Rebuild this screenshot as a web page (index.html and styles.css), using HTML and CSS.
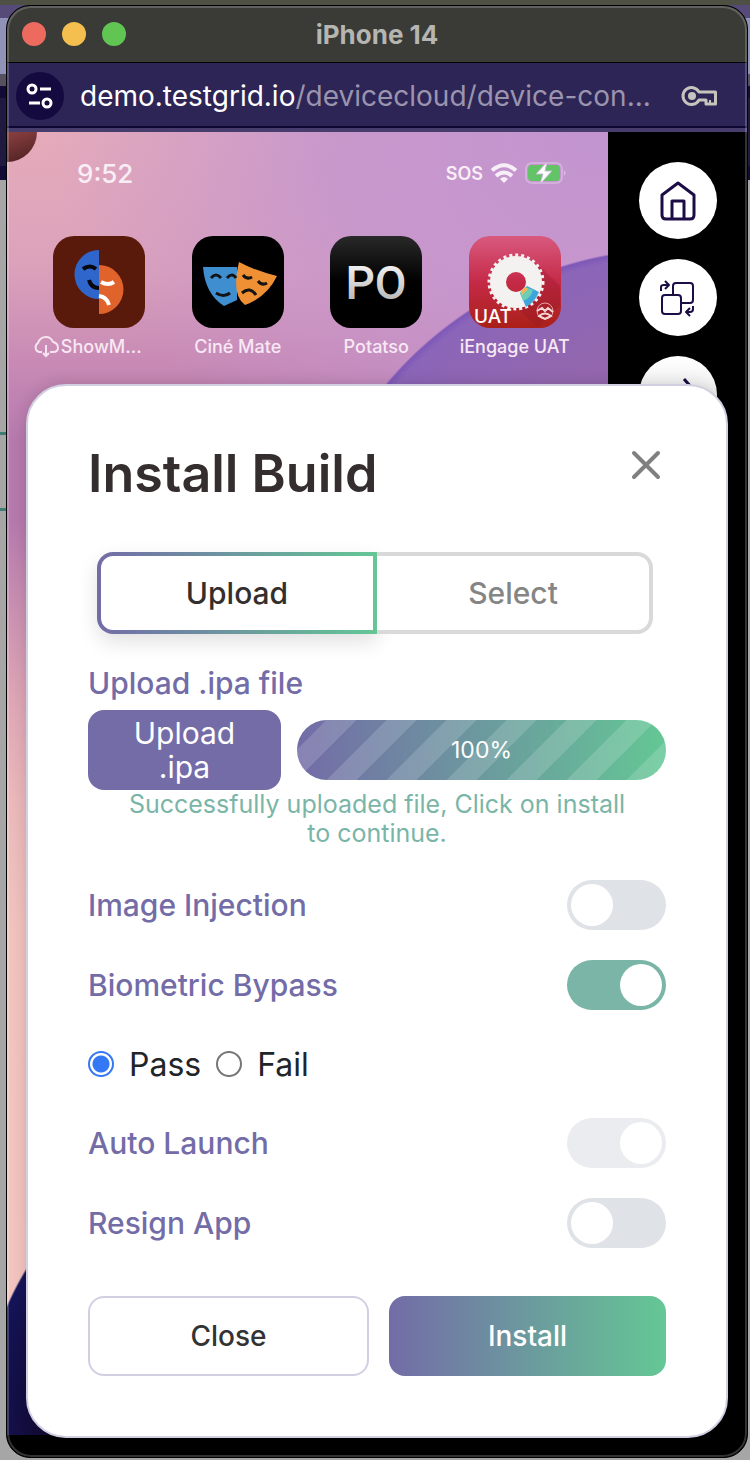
FILE: index.html
```html
<!DOCTYPE html>
<html lang="en">
<head>
  <meta charset="UTF-8">
  <meta name="viewport" content="width=device-width, initial-scale=1.0">
  <title>iPhone 14</title>
  <link rel="stylesheet" href="styles.css">
</head>
<body>
  <div class="window">
    <!-- Title bar -->
    <header class="title-bar">
      <div class="window-buttons">
        <span class="dot red"></span>
        <span class="dot yellow"></span>
        <span class="dot green"></span>
      </div>
      <h1 class="window-title">iPhone 14</h1>
    </header>

    <!-- Address bar -->
    <div class="address-bar">
      <button class="site-btn" aria-label="Site information">
        <svg width="48" height="48" viewBox="0 0 48 48" fill="none" stroke="#fff" stroke-width="3">
          <circle cx="16" cy="17" r="4"/>
          <path d="M24 17h11M13 31h11"/>
          <circle cx="31" cy="31" r="4"/>
        </svg>
      </button>
      <div class="url"><span class="host">demo.testgrid.io</span>/devicecloud/device-con...</div>
      <svg class="key-icon" width="38" height="22" viewBox="0 0 38 22" fill="none" stroke="#c6c4bd" stroke-width="3" stroke-linejoin="round">
        <path d="M18 7a8.500 8.500 0 1 0 0 8h7v4h9.500V7z"/>
        <path d="M29 19v-4" stroke-width="2"/>
        <circle cx="11" cy="11" r="4" fill="#c6c4bd" stroke="none"/>
      </svg>
    </div>

    <div class="stage">
      <!-- Device -->
      <div class="device">
        <section class="phone">
          <div class="status-bar">
            <span class="time">9:52</span>
            <div class="status-icons">
              <span class="sos">SOS</span>
              <svg width="26" height="20" viewBox="0 0 26 20" fill="none" stroke="#f7eef8" stroke-width="4">
                <path d="M1 7.500Q13-3 25 7.500M5 13Q13 6 21 13"/>
                <path d="M9 16q4-4 8 0l-4 4z" fill="#f7eef8" stroke="none"/>
              </svg>
              <svg width="42" height="24" viewBox="0 0 42 24">
                <rect x="1" y="2" width="36" height="20" rx="6" fill="none" stroke="#d3b0dc" stroke-width="2"/>
                <rect x="3" y="4" width="32" height="16" rx="4" fill="#62c466"/>
                <path d="M39 9q3 3 0 6z" fill="#d9bfe2"/>
                <path d="M22 1L11 13h7l-3 10 12-13h-7z" fill="#fff" stroke="#c9b7d5" stroke-width="1"/>
              </svg>
            </div>
          </div>

          <div class="apps">
            <div class="app">
              <svg class="app-icon" viewBox="0 0 92 92">
                <rect width="92" height="92" rx="21" fill="#5a1a0b"/>
                <path d="M46 14a24 24 0 0 0 0 49z" fill="#2f66cc"/>
                <path d="M46 29a24 24 0 0 1 0 49z" fill="#df632b"/>
                <path d="M30 33q7-5 13 0M36 44q2 8 10 8" fill="none" stroke="#08070c" stroke-width="4"/>
                <path d="M48 46q7 4 13 0M46 60q8 1 10 9" fill="none" stroke="#fff" stroke-width="4"/>
              </svg>
              <span class="app-name offloaded">
                <svg width="26" height="22" viewBox="0 0 26 22" fill="none" stroke="#f5e4f0" stroke-width="2">
                  <path d="M9 16H6a5 5 0 0 1-1-9q2-6 8-6 5 0 7 5 5 1 5 6 0 4-5 4h-3M13 9v11M10 17l3 3 3-3"/>
                </svg>
                ShowM...
              </span>
            </div>
            <div class="app">
              <svg class="app-icon" viewBox="0 0 92 92">
                <rect width="92" height="92" rx="21" fill="#000"/>
                <path d="M11 31h34v33L32 70Q13 58 11 31z" fill="#3f8ed0"/>
                <path d="M47 26q17 9 38 14-10 21-32 29-14-10-6-43z" fill="#f09035"/>
                <path d="M19 42q5-6 10 0M35 42q5-6 9 0M24 57q8 5 14 0M51 39q4 5 9 2M66 45q4 5 9 2M50 57q8-7 14 2" fill="none" stroke="#141414" stroke-width="3"/>
              </svg>
              <span class="app-name">Ciné Mate</span>
            </div>
            <div class="app">
              <svg class="app-icon" viewBox="0 0 92 92">
                <defs>
                  <linearGradient id="po-bg" x2="0" y2="1"><stop offset="0" stop-color="#292929"/><stop offset=".5" stop-color="#000"/></linearGradient>
                  <linearGradient id="po-fg" x2="0" y2="1"><stop offset="0" stop-color="#fff"/><stop offset="1" stop-color="#aaa"/></linearGradient>
                </defs>
                <rect width="92" height="92" rx="21" fill="url(#po-bg)"/>
                <text class="po-text" x="46" y="63" text-anchor="middle" fill="url(#po-fg)">PO</text>
              </svg>
              <span class="app-name">Potatso</span>
            </div>
            <div class="app">
              <svg class="app-icon" viewBox="0 0 92 92">
                <defs>
                  <linearGradient id="ia-bg" x2="0" y2="1"><stop offset="0" stop-color="#d85a7f"/><stop offset=".5" stop-color="#c52a47"/><stop offset="1" stop-color="#aa2018"/></linearGradient>
                </defs>
                <rect width="92" height="92" rx="21" fill="url(#ia-bg)"/>
                <path d="M67 27L91 50V70L69 91 48 72z" fill="#8e1724" opacity=".3"/>
                <circle cx="47" cy="46" r="18" fill="none" stroke="#f4f1f1" stroke-width="16"/>
                <circle cx="47" cy="46" r="27" fill="none" stroke="#f4f1f1" stroke-width="3" stroke-dasharray="3 3"/>
                <path d="M58 50l12 6q-4 10-13 15l-6-14z" fill="#3da5dc"/>
                <path d="M56 51l8 3q-2 8-10 11l-3-8z" fill="#6cceb5"/>
                <path d="M52 55l4-4 3 2-6 6z" fill="#f6b459"/>
                <circle cx="76" cy="75" r="8" fill="none" stroke="#e8a3a3" stroke-width="1"/>
                <path d="M68 75l5-3 3 3 3-3 5 4M70 80q6-5 12 0l-6 3z" fill="none" stroke="#f4d8d8" stroke-width="2"/>
                <text class="uat-text" x="5" y="87">UAT</text>
              </svg>
              <span class="app-name">iEngage UAT</span>
            </div>
          </div>
        </section>

        <aside class="toolbar">
          <button class="tool-btn" aria-label="Home">
            <svg width="40" height="42" viewBox="0 0 40 42" fill="none" stroke="#1c0d45" stroke-width="3" stroke-linejoin="round">
              <path d="M4 15L20 3l16 12v20q0 4-4 4H8q-4 0-4-4z"/>
              <path d="M14 39V21h12v18"/>
            </svg>
          </button>
          <button class="tool-btn" aria-label="Rotate screen">
            <svg width="40" height="40" viewBox="0 0 40 40" fill="none" stroke="#1c0d45" stroke-width="3" stroke-linejoin="round">
              <path d="M15 17V8q0-3 3-3h14q3 0 3 3v14q0 3-3 3h-9" stroke-width="2"/>
              <rect x="4" y="17" width="19" height="19" rx="3" stroke-width="2"/>
              <path d="M3 13V9q0-2 3-2h4M7 3l4 4-4 4M35 28v3q0 3-3 3h-3M32 30l-4 4 4 4" stroke-width="2"/>
            </svg>
          </button>
          <button class="tool-btn faded" aria-label="Swap">
            <svg width="40" height="40" viewBox="0 0 40 40" fill="none" stroke="#1c0d45" stroke-width="3" stroke-linejoin="round">
              <path d="M6 13h26M26 4l8 9-8 8M34 28H6M14 20l-8 8 8 8"/>
            </svg>
          </button>
        </aside>
      </div>

      <!-- Install build modal -->
      <div class="modal" role="dialog" aria-labelledby="modal-title">
        <div class="modal-header">
          <h2 class="modal-title" id="modal-title">Install Build</h2>
          <button class="close-icon" aria-label="Close dialog">
            <svg width="30" height="30" viewBox="0 0 30 30" stroke="#808080" stroke-width="4" stroke-linecap="round">
              <path d="M3 3l24 24M27 3L3 27"/>
            </svg>
          </button>
        </div>

        <div class="tabs">
          <button class="tab active">Upload</button>
          <button class="tab">Select</button>
        </div>

        <p class="field-label">Upload .ipa file</p>
        <div class="upload-row">
          <button class="upload-btn">Upload .ipa</button>
          <div class="progress" role="progressbar" aria-valuenow="100" aria-label="Upload progress">
            <div class="progress-bar" style="width: 100%">100%</div>
          </div>
        </div>
        <p class="upload-status">Successfully uploaded file, Click on install to continue.</p>

        <div class="options">
          <div class="option">
            <label class="field-label" for="image-injection">Image Injection</label>
            <input class="switch" type="checkbox" id="image-injection">
          </div>
          <div class="option">
            <label class="field-label" for="biometric">Biometric Bypass</label>
            <input class="switch" type="checkbox" id="biometric" checked>
          </div>
          <div class="radios">
            <input class="radio" type="radio" name="bypass" id="pass" checked>
            <label for="pass">Pass</label>
            <input class="radio" type="radio" name="bypass" id="fail">
            <label for="fail">Fail</label>
          </div>
          <div class="option">
            <label class="field-label" for="auto-launch">Auto Launch</label>
            <input class="switch" type="checkbox" id="auto-launch" checked disabled>
          </div>
          <div class="option">
            <label class="field-label" for="resign">Resign App</label>
            <input class="switch" type="checkbox" id="resign">
          </div>
        </div>

        <div class="modal-footer">
          <button class="btn btn-close">Close</button>
          <button class="btn btn-install">Install</button>
        </div>
      </div>
    </div>
  </div>
</body>
</html>
```

FILE: styles.css
```css
* {
  box-sizing: border-box;
}

/* Desktop behind the window */
body {
  margin: 0;
  padding: 5px 2px 2px 6px;
  font-family: Inter, "Open Sans", sans-serif;
  background:
    linear-gradient(#3f7d72, #3f7d72) 0 432px / 6px 3px no-repeat,
    linear-gradient(#3f7d72, #3f7d72) 0 508px / 6px 3px no-repeat,
    linear-gradient(#4d5043 0 5px, #554a78 5px 18px, #9092b8 18px 74px, #565060 74px 86px, #120b35 86px 98px, #211a40 98px 166px, #120b35 166px 180px, #a6a6a6 180px);
}

button {
  font-family: inherit;
  border: none;
  padding: 0;
  cursor: pointer;
}

svg {
  display: block;
}

.window {
  position: relative;
  border: 1px solid #000;
  border-radius: 24px;
  overflow: hidden;
  background: #000;
}

/* light edge drawn over the window content */
.window::after {
  content: "";
  position: absolute;
  inset: 0;
  border-radius: 24px;
  box-shadow: inset 0 0 0 2px rgba(255, 255, 255, 0.2);
  pointer-events: none;
}

/* Title bar */
.title-bar {
  display: grid;
  grid-template-columns: 1fr auto 1fr;
  align-items: center;
  height: 57px;
  padding: 0 15px;
  background: #3a3a37;
  border-bottom: 1px solid #000;
}

.window-buttons {
  display: flex;
  gap: 16px;
}

.dot {
  width: 24px;
  height: 24px;
  border-radius: 50%;
}

.red {
  background: #ed6a5e;
}

.yellow {
  background: #f5bf4f;
}

.green {
  background: #61c554;
}

.window-title {
  margin: 0;
  font-size: 26px;
  font-weight: 700;
  color: #b5b5b2;
}

/* Address bar */
.address-bar {
  display: flex;
  align-items: center;
  height: 69px;
  padding: 0 28px 0 9px;
  background: #2d2555;
  border-bottom: 4px solid #463d6c;
  box-shadow: inset 0 -2px #0d0833;
}

.site-btn {
  width: 48px;
  height: 48px;
  border-radius: 50%;
  background: #140a40;
}

.url {
  flex: 1;
  margin-left: 16px;
  font-size: 28px;
  white-space: nowrap;
  color: #9b94ae;
}

.host {
  color: #fff;
}

/* The device and the modal share one grid cell */
.stage {
  display: grid;
}

.device,
.modal {
  grid-area: 1 / 1;
}

.device {
  display: flex;
  padding-bottom: 22px;
}

.phone {
  position: relative;
  flex: 1;
  background:
    radial-gradient(circle at 293px 100%, #100822 0, #110a30 250px, #16145a 319px, transparent 321px),
    radial-gradient(circle at 669px 495px, #9467a8 0, #9467ad 260px, #8b65b8 370px, #7e58b8 377px, transparent 379px),
    radial-gradient(ellipse 560px 380px at 100% 0, #c294d0 0, rgba(194, 148, 208, 0.8) 50%, transparent),
    linear-gradient(#e5abba 0, #dca2bb 130px, #c88ab5 230px, #b67aae 310px, #b67aae 390px, #c98fb2 470px, #dfa7b6 570px, #ebb9bb 670px, #f2c4be 800px, #f4c5c0);
}

/* round corner button cut off by the window */
.phone::before {
  content: "";
  position: absolute;
  top: 0;
  left: 0;
  width: 30px;
  height: 30px;
  border-bottom-right-radius: 30px;
  background: linear-gradient(160deg, #8c4042, #4a1f20);
}

.status-bar {
  display: flex;
  justify-content: space-between;
  align-items: center;
  height: 32px;
  margin: 25px 41px 0 70px;
  color: #f9eef6;
}

.time {
  font-size: 26px;
  font-weight: 500;
}

.status-icons {
  display: flex;
  align-items: center;
  gap: 8px;
}

.sos {
  font-size: 18px;
  font-weight: 600;
}

.apps {
  display: grid;
  grid-template-columns: repeat(4, 1fr);
  margin: 47px 24px 0 23px;
}

.app {
  display: flex;
  flex-direction: column;
  align-items: center;
  gap: 8px;
}

.app-icon {
  width: 92px;
  height: 92px;
}

.app-name {
  display: flex;
  align-items: center;
  gap: 2px;
  font-size: 18px;
  font-weight: 500;
  line-height: 22px;
  white-space: nowrap;
  color: #f7e8f4;
}

.offloaded {
  margin-right: 24px;
}

.po-text {
  font-family: Roboto, sans-serif;
  font-size: 46px;
  font-weight: 500;
}

.uat-text {
  font-size: 19px;
  font-weight: 500;
  fill: #fff;
}

/* Toolbar */
.toolbar {
  display: flex;
  flex-direction: column;
  align-items: center;
  gap: 20px;
  width: 139px;
  padding-top: 30px;
  background: #000;
}

.tool-btn {
  display: flex;
  justify-content: center;
  align-items: center;
  width: 78px;
  height: 77px;
  border-radius: 50%;
  background: #fff;
}

.faded {
  background: linear-gradient(#fff, #ddd);
}

/* Modal */
.modal {
  z-index: 1;
  margin: 252px 19px 19px;
  padding: 56px 60px 60px;
  background: #fff;
  border: 2px solid #d2cfe2;
  border-radius: 40px;
  box-shadow: 0 0 16px rgba(0, 0, 0, 0.15);
}

.modal-header {
  display: flex;
  justify-content: space-between;
  align-items: flex-start;
}

.modal-title {
  margin: 0;
  font-size: 52px;
  font-weight: 600;
  line-height: 64px;
  color: #352e2e;
}

.close-icon {
  margin: 8px 5px;
  background: none;
}

.tabs {
  display: flex;
  margin: 46px 13px 0 9px;
}

.tab {
  flex: 1;
  height: 82px;
  font-size: 30px;
  font-weight: 500;
  color: #858585;
  background: #fff;
  border: 4px solid #d9d9d9;
  border-left: none;
  border-radius: 0 16px 16px 0;
}

.tab.active {
  color: #352e2e;
  border: 4px solid transparent;
  border-radius: 16px 0 0 16px;
  background:
    linear-gradient(#fff, #fff) padding-box,
    linear-gradient(90deg, #736ca7, #64c795) border-box;
  box-shadow: 0 8px 20px rgba(0, 0, 0, 0.12);
}

.field-label {
  margin: 0;
  font-size: 30px;
  font-weight: 500;
  line-height: 34px;
  color: #736ca7;
}

.tabs + .field-label {
  margin-top: 32px;
}

.upload-row {
  display: flex;
  align-items: center;
  gap: 16px;
  margin-top: 10px;
}

.upload-btn {
  width: 193px;
  height: 80px;
  padding: 0 40px;
  font-size: 30px;
  line-height: 34px;
  color: #fff;
  background: #736ca7;
  border-radius: 16px;
}

.progress {
  flex: 1;
  height: 60px;
  border-radius: 30px;
  overflow: hidden;
  background: #e9ecef;
}

.progress-bar {
  height: 100%;
  font-size: 23px;
  line-height: 60px;
  text-align: center;
  color: #fff;
  background:
    linear-gradient(135deg, transparent 25%, rgba(255, 255, 255, 0.15) 25% 50%, transparent 50% 75%, rgba(255, 255, 255, 0.15) 75%) 0 0 / 60px 60px,
    linear-gradient(90deg, #736ca7, #64c795);
}

.upload-status {
  max-width: 500px;
  margin: 0 auto;
  font-size: 25px;
  line-height: 29px;
  text-align: center;
  color: #7ab5a7;
}

/* Options */
.options {
  display: flex;
  flex-direction: column;
  gap: 30px;
  margin-top: 32px;
}

.option {
  display: flex;
  justify-content: space-between;
  align-items: center;
}

.switch {
  appearance: none;
  display: flex;
  align-items: center;
  width: 99px;
  height: 50px;
  margin: 0;
  padding: 4px;
  border-radius: 25px;
  background: #dfe2e7;
}

.switch::before {
  content: "";
  width: 42px;
  height: 42px;
  border-radius: 50%;
  background: #fff;
}

.switch:checked {
  justify-content: flex-end;
  background: #7ab5a7;
}

.switch:disabled {
  background: #ebecf0;
}

.radios {
  display: flex;
  align-items: center;
  height: 48px;
  font-size: 32px;
  color: #212529;
}

.radios label {
  margin: 0 15px;
}

.radio {
  appearance: none;
  width: 26px;
  height: 26px;
  margin: 0;
  border: 2px solid #767676;
  border-radius: 50%;
  background: #fff;
}

.radio:checked {
  border-color: #3478f6;
  background: radial-gradient(circle, #3478f6 8px, #fff 9px);
}

/* Footer */
.modal-footer {
  display: flex;
  gap: 20px;
  margin-top: 48px;
}

.btn {
  flex: 1 1 0;
  height: 80px;
  font-size: 28px;
  font-weight: 500;
  border-radius: 16px;
}

.btn-close {
  color: #333;
  background: #fff;
  border: 2px solid #d2cfe2;
}

.btn-install {
  color: #fff;
  background: linear-gradient(90deg, #736ca7, #64c795);
}
```
